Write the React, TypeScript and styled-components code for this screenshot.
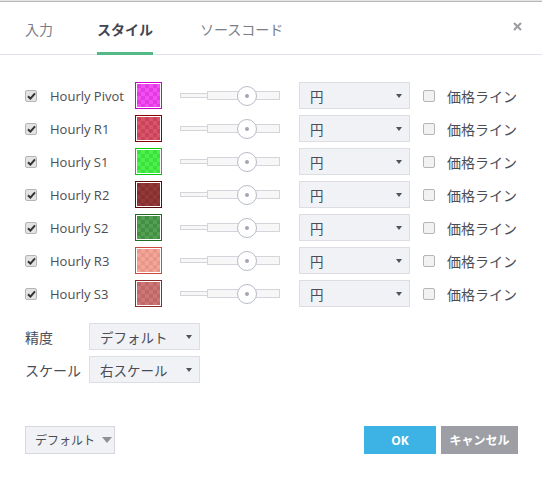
import React from "react";
import styled, { createGlobalStyle } from "styled-components";

const Global = createGlobalStyle`
  html, body { margin: 0; padding: 0; background: #ffffff; }
  body { font-family: "Open Sans", "Noto Sans CJK JP", sans-serif; color: #4a4d55; }
  * { box-sizing: border-box; }
`;

const Page = styled.div`
  width: 542px;
  height: 480px;
  background: #fff;
  display: flex;
  flex-direction: column;
`;

const TopEdge = styled.div`
  height: 2px;
  background: #e4e4e4;
  border-bottom: 1px solid #b9b9b9;
`;

const Header = styled.div`
  height: 53px;
  display: flex;
  align-items: stretch;
  padding-left: 25px;
  padding-right: 20px;
  border-bottom: 1px solid #e0e3eb;
  position: relative;
`;

const Tab = styled.div<{ $active?: boolean; $mr: number }>`
  display: flex;
  align-items: center;
  margin-right: ${(p) => p.$mr}px;
  font-size: 14px;
  font-weight: ${(p) => (p.$active ? 700 : 400)};
  color: ${(p) => (p.$active ? "#434651" : "#7b7e86")};
  border-bottom: 3px solid ${(p) => (p.$active ? "#53b987" : "transparent")};
  padding-top: 3px;
  margin-bottom: -1px;
`;

const Close = styled.div`
  position: absolute;
  right: 20px;
  top: 20px;
  width: 9px;
  height: 9px;
  display: flex;
`;

const Body = styled.div`
  padding: 27px 0 0 25px;
  display: flex;
  flex-direction: column;
  gap: 6px;
`;

const Row = styled.div`
  display: flex;
  align-items: center;
  height: 27px;
`;

const Check = styled.div<{ $checked?: boolean }>`
  width: 12px;
  height: 12px;
  border: 1px solid #b5b5b5;
  border-radius: 2px;
  background: ${(p) => (p.$checked ? "#e3e3e3" : "#f2f2f2")};
  display: flex;
  align-items: center;
  justify-content: center;
  flex: none;
`;

const RowLabel = styled.div`
  margin-left: 13px;
  width: 85px;
  font-size: 13px;
  color: #4a4d55;
  white-space: nowrap;
`;

const Swatch = styled.div<{ $border: string; $a: string; $b: string }>`
  width: 27px;
  height: 27px;
  border: 1px solid ${(p) => p.$border};
  padding: 1px;
  background: #fff;
  flex: none;
  &::after {
    content: "";
    display: block;
    width: 100%;
    height: 100%;
    background: repeating-conic-gradient(${(p) => p.$a} 0 25%, ${(p) => p.$b} 0 50%) 0 0 / 8px 8px;
  }
`;

const Slider = styled.div`
  margin-left: 18px;
  width: 100px;
  height: 20px;
  display: flex;
  align-items: center;
  position: relative;
  flex: none;
`;

const ThinTrack = styled.div`
  width: 27px;
  height: 5px;
  border: 1px solid #d3d5da;
  border-right: none;
  background: #f7f7f8;
`;

const ThickTrack = styled.div`
  flex: 1;
  height: 9px;
  border: 1px solid #d3d5da;
  background: #f7f7f8;
`;

const Knob = styled.div`
  position: absolute;
  left: 57px;
  top: 0;
  width: 20px;
  height: 20px;
  border-radius: 50%;
  border: 1px solid #b7bcc6;
  background: #fff;
  display: flex;
  align-items: center;
  justify-content: center;
  &::after {
    content: "";
    width: 4px;
    height: 4px;
    border-radius: 50%;
    background: #a2a7b0;
  }
`;

const Select = styled.div<{ $ml?: number }>`
  margin-left: ${(p) => p.$ml ?? 0}px;
  width: 111px;
  height: 27px;
  background: #f1f2f6;
  border: 1px solid #dcdee3;
  display: flex;
  align-items: center;
  padding: 0 7px 0 10px;
  font-size: 13.5px;
  color: #4a4d55;
  flex: none;
`;

const SelectText = styled.span`
  flex: 1;
`;

const Caret = styled.span<{ $color?: string; $w?: number }>`
  width: 0;
  height: 0;
  border-left: ${(p) => (p.$w ?? 7) / 2}px solid transparent;
  border-right: ${(p) => (p.$w ?? 7) / 2}px solid transparent;
  border-top: ${(p) => Math.round((p.$w ?? 7) / 2 + 0.5)}px solid ${(p) => p.$color ?? "#50535b"};
`;

const LineCheck = styled(Check)`
  margin-left: 13px;
`;

const LineLabel = styled.div`
  margin-left: 12px;
  font-size: 14px;
  color: #4a4d55;
  white-space: nowrap;
`;

const Options = styled.div`
  margin-top: 10px;
  display: flex;
  flex-direction: column;
  gap: 6px;
`;

const OptLabel = styled.div`
  width: 64px;
  font-size: 14px;
  color: #4a4d55;
`;

const Footer = styled.div`
  margin-top: 43px;
  padding: 0 24px 0 25px;
  display: flex;
  align-items: center;
`;

const DefaultBtn = styled.div`
  width: 90px;
  height: 28px;
  background: #f1f2f6;
  border: 1px solid #d6d8dd;
  display: flex;
  align-items: center;
  gap: 7px;
  padding-left: 9px;
  font-size: 12px;
  color: #4a4d55;
`;

const Spacer = styled.div`
  flex: 1;
`;

const Btn = styled.div<{ $bg: string; $w: number; $ml?: number }>`
  width: ${(p) => p.$w}px;
  height: 28px;
  margin-left: ${(p) => p.$ml ?? 0}px;
  background: ${(p) => p.$bg};
  color: #fff;
  font-weight: 700;
  font-size: 12px;
  display: flex;
  align-items: center;
  justify-content: center;
`;

const CheckMark = () => (
  <svg width="9" height="8" viewBox="0 0 9 8">
    <path d="M1 4.2 L3.4 6.6 L8 1.4" fill="none" stroke="#2f3238" strokeWidth="2" />
  </svg>
);

const rows = [
  { name: "Hourly Pivot", border: "#d000d0", a: "#f24ef2", b: "#e43ae4" },
  { name: "Hourly R1", border: "#8b0000", a: "#d9546a", b: "#c94458" },
  { name: "Hourly S1", border: "#00cc00", a: "#4cf24c", b: "#3ee03e" },
  { name: "Hourly R2", border: "#5c0a0a", a: "#953838", b: "#843030" },
  { name: "Hourly S2", border: "#226b22", a: "#52a052", b: "#458f45" },
  { name: "Hourly R3", border: "#d0483c", a: "#f3a597", b: "#e8958a" },
  { name: "Hourly S3", border: "#8a2a2a", a: "#cc7676", b: "#be6868" },
];

export default function App() {
  return (
    <Page>
      <Global />
      <TopEdge />
      <Header>
        <Tab $mr={44}>入力</Tab>
        <Tab $active $mr={47}>スタイル</Tab>
        <Tab $mr={0}>ソースコード</Tab>
        <Close>
          <svg width="9" height="9" viewBox="0 0 9 9">
            <path d="M1 1 L8 8 M8 1 L1 8" stroke="#9a9ca2" strokeWidth="2" />
          </svg>
        </Close>
      </Header>
      <Body>
        {rows.map((r) => (
          <Row key={r.name}>
            <Check $checked>
              <CheckMark />
            </Check>
            <RowLabel>{r.name}</RowLabel>
            <Swatch $border={r.border} $a={r.a} $b={r.b} />
            <Slider>
              <ThinTrack />
              <ThickTrack />
              <Knob />
            </Slider>
            <Select $ml={19}>
              <SelectText>円</SelectText>
              <Caret />
            </Select>
            <LineCheck />
            <LineLabel>価格ライン</LineLabel>
          </Row>
        ))}
        <Options>
          <Row>
            <OptLabel>精度</OptLabel>
            <Select>
              <SelectText>デフォルト</SelectText>
              <Caret />
            </Select>
          </Row>
          <Row>
            <OptLabel>スケール</OptLabel>
            <Select>
              <SelectText>右スケール</SelectText>
              <Caret />
            </Select>
          </Row>
        </Options>
      </Body>
      <Footer>
        <DefaultBtn>
          デフォルト
          <Caret $color="#8e9096" $w={10} />
        </DefaultBtn>
        <Spacer />
        <Btn $bg="#3cb3e4" $w={72}>OK</Btn>
        <Btn $bg="#9d9fa5" $w={77} $ml={5}>キャンセル</Btn>
      </Footer>
    </Page>
  );
}
